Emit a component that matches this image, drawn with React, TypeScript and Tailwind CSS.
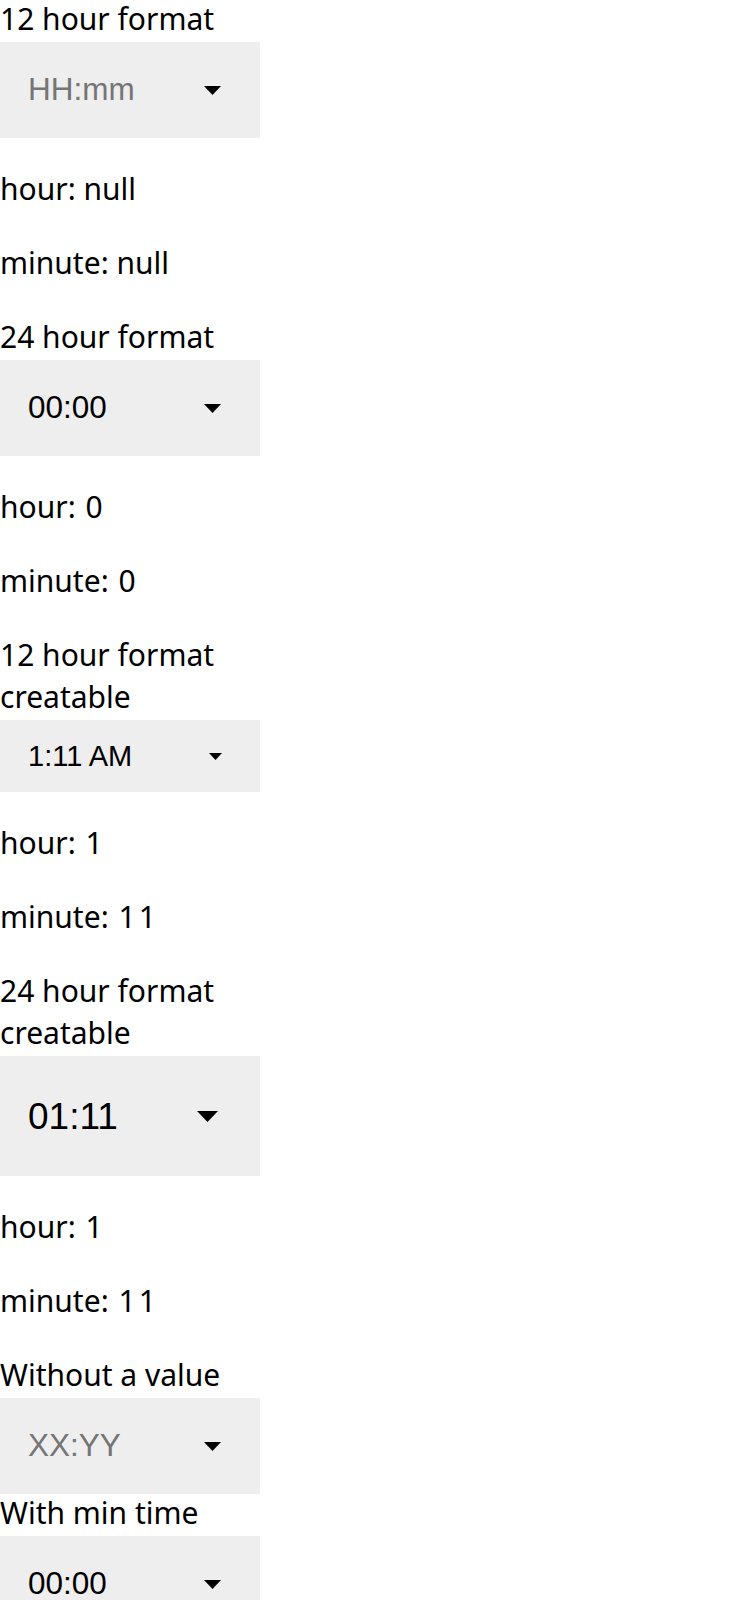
import React from "react";

type Size = "sm" | "md" | "lg";

function Arrow({ size }: { size: Size }) {
  const dims =
    size === "sm" ? { w: 13, h: 7 } : size === "lg" ? { w: 21, h: 11 } : { w: 17, h: 9 };
  return (
    <svg width={dims.w} height={dims.h} viewBox="0 0 10 5" preserveAspectRatio="none" className="shrink-0">
      <path d="M0 0H10L5 5Z" fill="#000" />
    </svg>
  );
}

function TimeSelect({ text, placeholder, size }: { text: string; placeholder?: boolean; size: Size }) {
  const box =
    size === "sm"
      ? "h-[72px] text-[29px] pr-[38px]"
      : size === "lg"
      ? "h-[120px] text-[37px] pr-[42px]"
      : "h-[96px] text-[31.5px] pr-[39px]";
  return (
    <div
      className={`flex w-[260px] items-center justify-between bg-[#eeeeee] pl-[28px] font-['Liberation_Sans',Arial,sans-serif] leading-none ${box}`}
    >
      <span className={placeholder ? "text-[#757575]" : "text-black"}>{text}</span>
      <Arrow size={size} />
    </div>
  );
}

function Label({ children, first }: { children: React.ReactNode; first?: boolean }) {
  return (
    <div className={`${first ? "mt-[-2px]" : "mt-[32px]"} mb-[2px] leading-[42px]`}>{children}</div>
  );
}

function Line({
  name,
  value,
  afterSelect,
}: {
  name: string;
  value: string;
  afterSelect?: boolean;
}) {
  const numeric = /^\d+$/.test(value);
  return (
    <p className={`${afterSelect ? "mt-[30px]" : "mt-[32px]"} leading-[42px]`}>
      {name}:{" "}
      <span className={numeric ? "ml-[2px] tracking-[3px]" : ""}>{value}</span>
    </p>
  );
}

export default function App() {
  return (
    <div className="min-h-[1600px] w-[750px] bg-white">
      <div className="flex w-[260px] flex-col font-['Noto_Sans',sans-serif] text-[30px] text-black">
        <Label first>12 hour format</Label>
        <TimeSelect text="HH:mm" placeholder size="md" />
        <Line afterSelect name="hour" value="null" />
        <Line name="minute" value="null" />

        <Label>24 hour format</Label>
        <TimeSelect text="00:00" size="md" />
        <Line afterSelect name="hour" value="0" />
        <Line name="minute" value="0" />

        <Label>12 hour format creatable</Label>
        <TimeSelect text="1:11 AM" size="sm" />
        <Line afterSelect name="hour" value="1" />
        <Line name="minute" value="11" />

        <Label>24 hour format creatable</Label>
        <TimeSelect text="01:11" size="lg" />
        <Line afterSelect name="hour" value="1" />
        <Line name="minute" value="11" />

        <Label>Without a value</Label>
        <TimeSelect text="XX:YY" placeholder size="md" />

        <Label first>With min time</Label>
        <TimeSelect text="00:00" size="md" />
      </div>
    </div>
  );
}
